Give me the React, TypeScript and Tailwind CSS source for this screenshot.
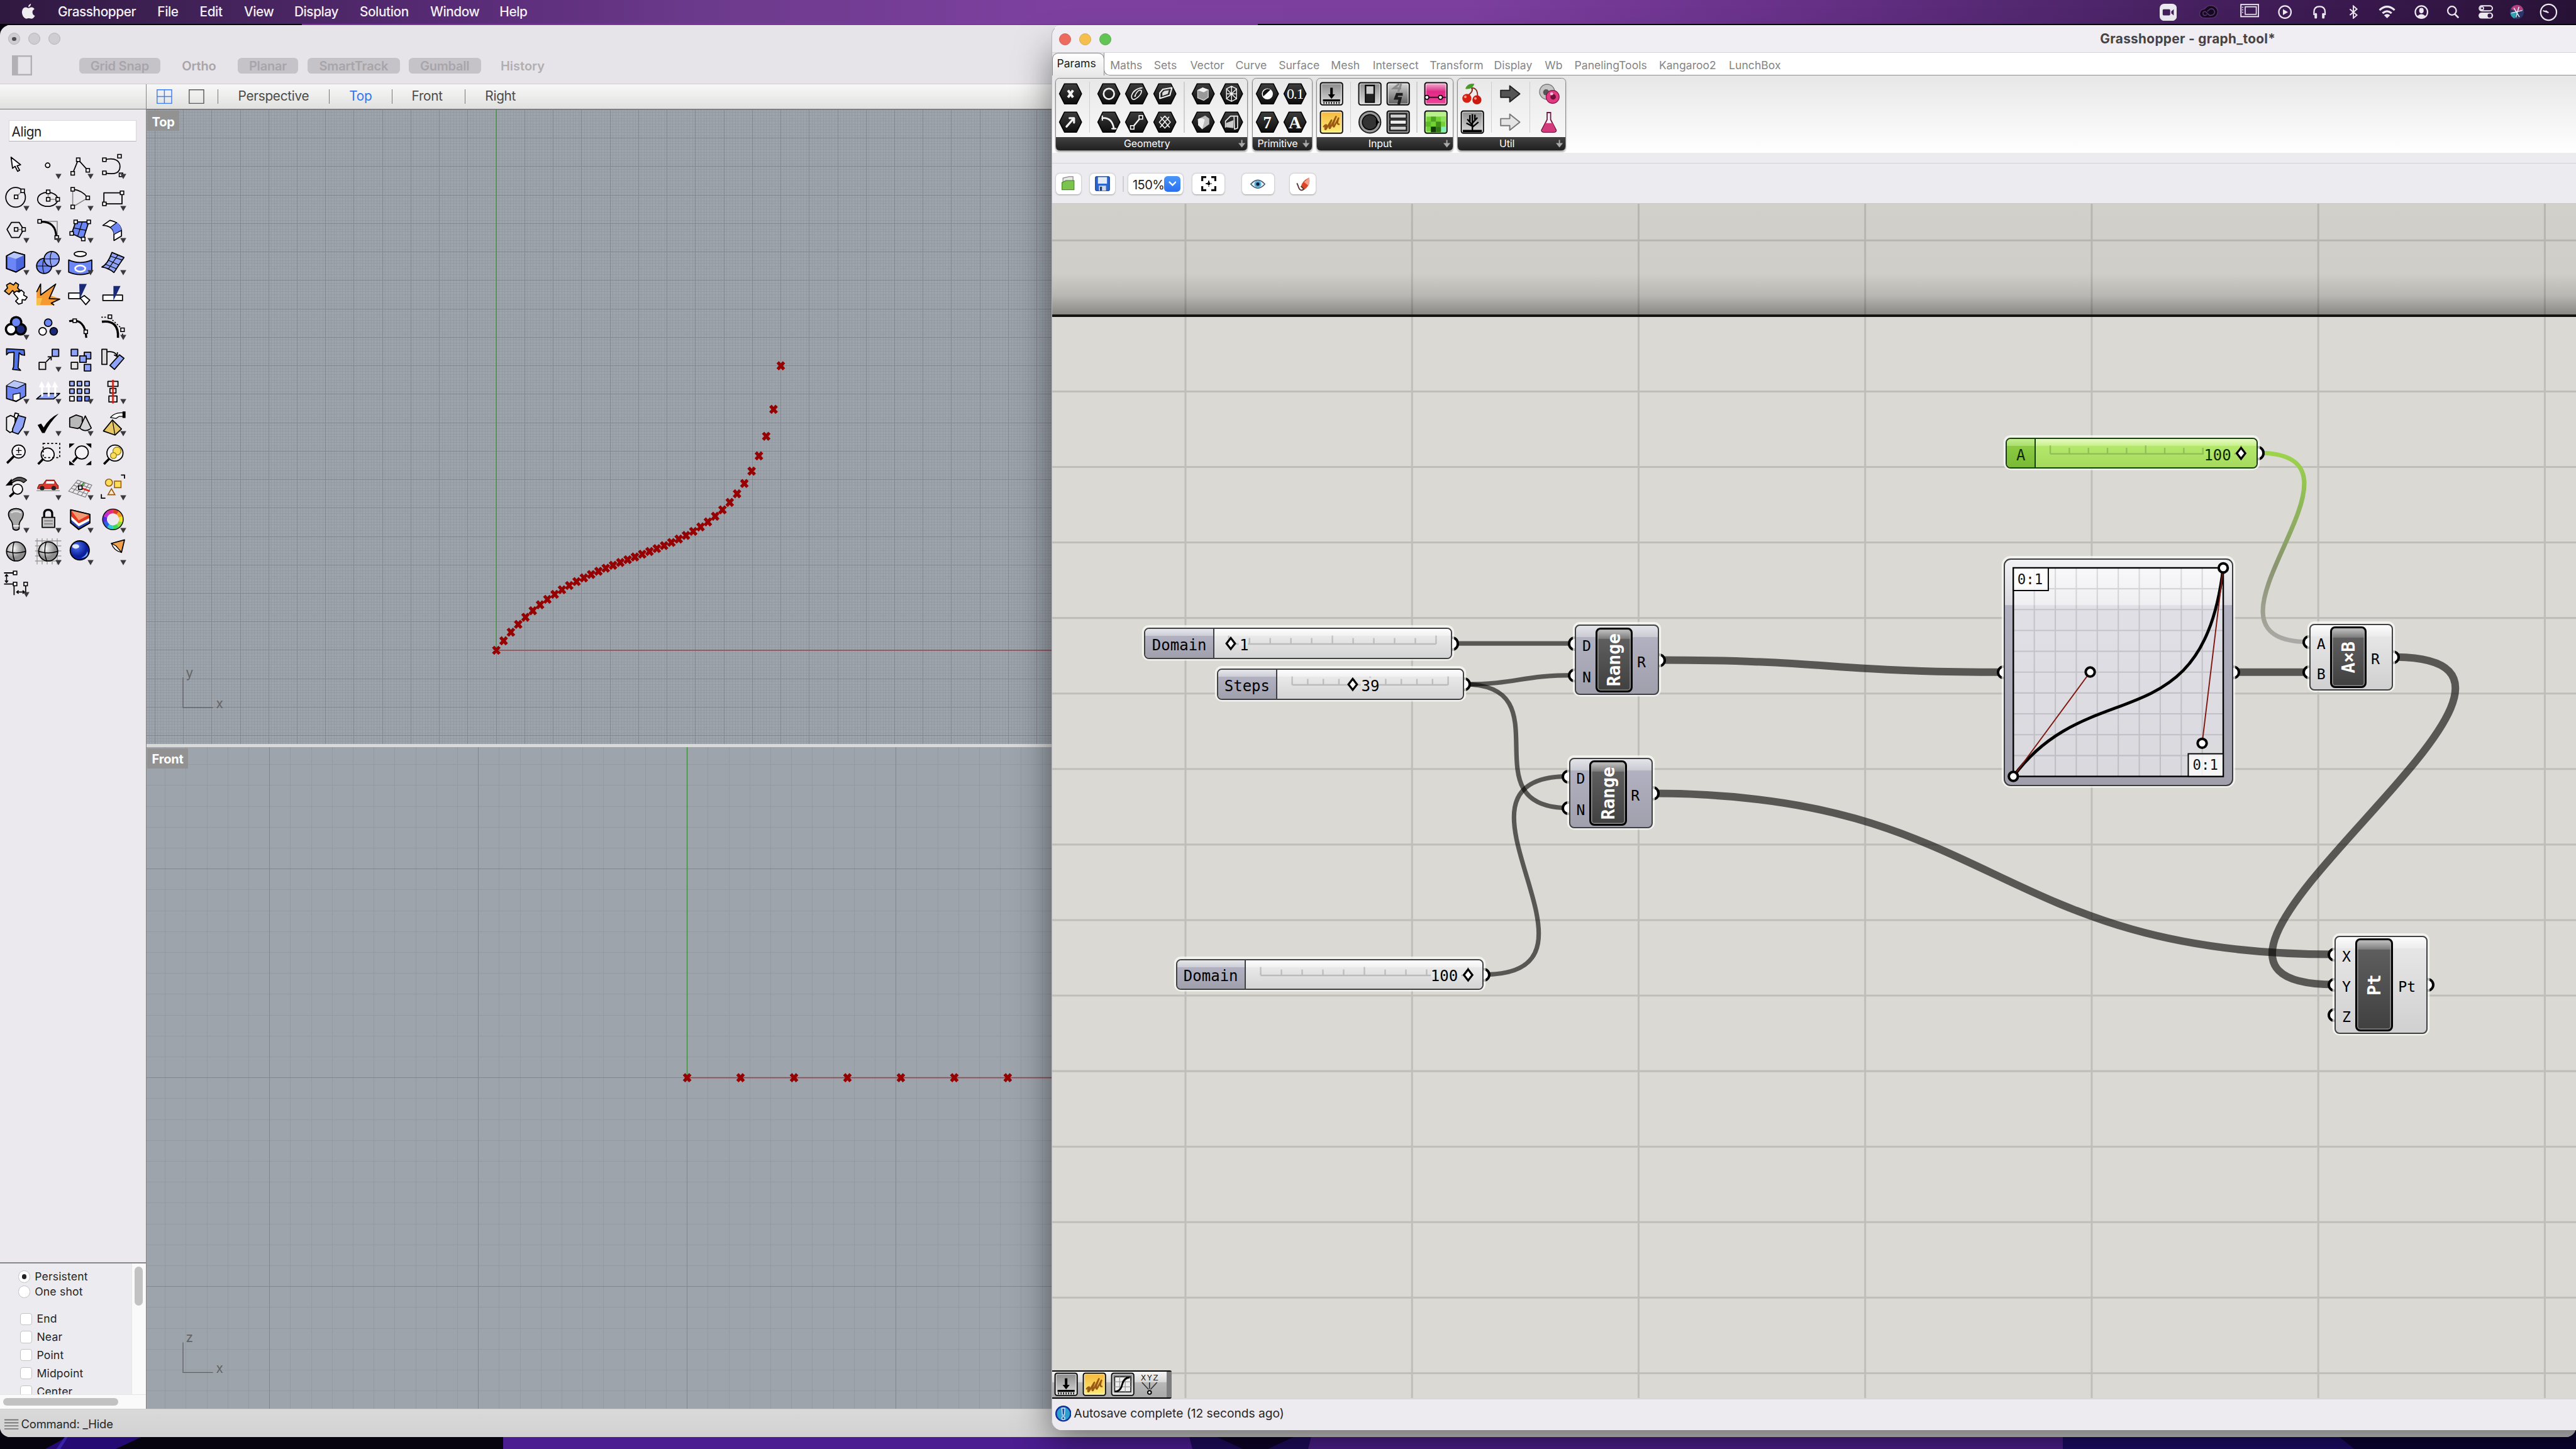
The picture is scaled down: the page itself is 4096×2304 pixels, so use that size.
import React from "react";

const BLUE = "#6c86f5";
const PALE = "#b9c6fa";
const NAVY = "#1b2a78";

/* ---------- tool palette drawings (64 x 64 cells) ---------- */

function Handle({ x, y }: { x: number; y: number }) {
  return <rect x={x - 3.5} y={y - 3.5} width={7} height={7} fill="#fff" stroke="#000" strokeWidth={2} />;
}
const H = (pts: number[][]) => pts.map(([x, y], i) => <Handle key={i} x={x} y={y} />);
const K = { fill: "none", stroke: "#000", strokeWidth: 2.2, strokeLinejoin: "round" as const };

const lens = (cx: number, cy: number, r: number, hx: number, hy: number) => (
  <>
    <path d={`M${cx - r * 0.7} ${cy + r * 0.7}L${hx} ${hy}`} stroke="#000" strokeWidth={4.5} />
    <circle cx={cx} cy={cy} r={r} fill="#f4f3f6" stroke="#000" strokeWidth={2.2} />
  </>
);

const tools: [React.ReactNode, boolean][] = [
  [<path d="M22 15L25 37L30 33L35 43L39 41L34 32L41 30Z" {...K} fill="#fff" />, false],
  [<circle cx={31} cy={31} r={4.5} {...K} fill="#fff" />, true],
  [<><path d="M17 47L28 20L47 41" {...K} />{H([[17, 47], [28, 20], [47, 41]])}</>, true],
  [<><path d="M15 20C38 14 46 24 46 33C46 45 38 51 15 46" {...K} />{H([[15, 20], [45, 13], [15, 46], [48, 50]])}</>, true],

  [<><circle cx={31} cy={31} r={19.5} {...K} /><path d="M32 30L45 18" stroke="#888" strokeWidth={2} />{H([[32, 30], [45, 18]])}</>, true],
  [<><ellipse cx={31} cy={35} rx={20} ry={14} {...K} /><path d="M32 20V35H51" stroke="#888" strokeWidth={2} fill="none" />{H([[32, 20], [32, 35], [51, 35]])}</>, true],
  [<><path d="M17 15V50L47 32" stroke="#888" strokeWidth={2} fill="none" /><path d="M17 15Q36 17 47 32" {...K} />{H([[17, 15], [17, 50], [47, 32]])}</>, true],
  [<><rect x={14} y={22} width={36} height={22} {...K} />{H([[50, 22], [15, 44]])}</>, true],

  [<><path d="M14 31L23 17H38L47 31L38 47H23Z" {...K} /><path d="M32 31H47" stroke="#888" strokeWidth={2} />{H([[32, 31], [47, 31]])}</>, true],
  [<><path d="M15 15H50V47" stroke="#888" strokeWidth={2} fill="none" /><path d="M15 16Q48 14 48 47" fill="none" stroke="#000" strokeWidth={4} />{H([[15, 15], [49, 47]])}</>, true],
  [<><path d="M23 16H49L38 50L15 39Z" {...K} fill={BLUE} /><path d="M36 16L27 44M19 28L44 33" stroke="#000" strokeWidth={1.5} />{H([[23, 16], [49, 16], [15, 39], [38, 50]])}</>, true],
  [<><path d="M12 23L26 13Q46 17 49 33V44L34 53V38Q31 24 12 23Z" {...K} fill="#fff" /><path d="M27 27L40 17Q48 24 49 33L34 41Q34 32 27 27Z" fill={BLUE} /><path d="M27 27L40 17M34 41L49 33" stroke="#000" strokeWidth={1.5} /></>, true],

  [<><path d="M13 20L28 12L49 18V42L32 52L13 45Z" {...K} fill={BLUE} /><path d="M13 20L28 12L49 18L32 26Z" fill={PALE} /><path d="M32 26V52L49 42V18Z" fill="#4a66dd" /><path d="M13 20L28 12L49 18V42L32 52L13 45Z" {...K} /></>, true],
  [<><circle cx={24} cy={40} r={15} {...K} fill={BLUE} /><path d="M24 25Q18 40 24 55M9 40H39" {...K} strokeWidth={1.3} /><circle cx={39} cy={26} r={15} {...K} fill="#8fa3f8" /><path d="M39 11Q33 26 39 41M24 26H54" {...K} strokeWidth={1.3} /></>, true],
  [<><ellipse cx={32} cy={16} rx={12} ry={5} {...K} fill="#fff" /><path d="M9 28Q32 38 55 28V52Q32 62 9 52Z" {...K} fill={BLUE} /><ellipse cx={32} cy={45} rx={10} ry={6} fill="none" stroke="#fff" strokeWidth={3.5} /></>, true],
  [<><path d="M10 42Q22 36 30 13L54 23Q46 34 34 53Q24 44 10 42Z" {...K} fill="#8fa3f8" /><path d="M22 28L44 38M42 18Q34 30 22 47M26 20L50 28M16 36L40 46" stroke="#000" strokeWidth={1.4} fill="none" /></>, true],

  [<><path d="M9 26L15 20L13 14L20 10L27 14L31 9L37 13L35 20L39 24L30 30L25 25L18 33Z" {...K} fill="#f2a43a" /><path d="M27 30L33 26L38 28L42 24L48 29L47 34L54 38L50 44L44 43L44 50L37 52L31 46L36 41Z" {...K} fill="#fff" /></>, false],
  [<><path d="M9 54V30L16 12V34L47 12L37 35L55 41L41 48L44 54Z" fill="#f59a32" /><path d="M9 40L20 40L16 54H9Z" fill="#f8c04a" /><path d="M9 28L17 12V34L47 12L34 41L55 42L38 50L44 54" {...K} /></>, false],
  [<><rect x={9} y={30} width={23} height={11} {...K} fill="#fff" /><path d="M32 40L40 35L51 44L43 53Z" {...K} fill="#fff" /><path d="M30 12H45L31 42Z" fill={NAVY} /></>, false],
  [<><rect x={12} y={34} width={39} height={11} {...K} fill="#fff" /><path d="M33 16H47L33 45Z" fill={NAVY} /></>, false],

  [<><g stroke="#000" strokeWidth={7}><circle cx={32} cy={23} r={9} /><circle cx={22} cy={37} r={9} /><circle cx={41} cy={37} r={9} /></g><circle cx={22} cy={37} r={8} fill="#fff" /><circle cx={41} cy={37} r={8} fill={NAVY} /><circle cx={32} cy={23} r={8} fill={BLUE} /></>, true],
  [<><circle cx={32} cy={24} r={7.5} {...K} fill={BLUE} /><circle cx={21} cy={41} r={7.5} {...K} fill="#fff" /><circle cx={43} cy={41} r={7.5} {...K} fill={NAVY} /></>, false],
  [<><path d="M10 21Q42 14 44 54" fill="none" stroke="#000" strokeWidth={4} />{H([[21, 20], [43, 42]])}</>, false],
  [<><path d="M10 22Q44 18 42 54" fill="none" stroke="#000" strokeWidth={4.5} /><path d="M9 13H25L51 37V54" fill="none" stroke="#000" strokeWidth={2} strokeDasharray="3 3" />{H([[26, 12], [51, 38]])}</>, true],

  [<><path d="M13 12L48 14L49 25L43 24L38 20L36 50L41 55L25 53L27 48L28 19L17 20L13 24Z" {...K} fill="#4f74ee" /></>, false],
  [<><rect x={14} y={39} width={13} height={14} {...K} fill="#e5e5e5" /><rect x={40} y={13} width={13} height={14} {...K} fill="#8fa3f8" /><path d="M28 38L37 29M31 28H38V35" {...K} /></>, true],
  [<><rect x={14} y={13} width={13} height={13} {...K} fill="#8fa3f8" /><rect x={14} y={39} width={13} height={13} {...K} fill="#e5e5e5" /><rect x={40} y={19} width={13} height={13} {...K} fill="#8fa3f8" /><rect x={31} y={26} width={13} height={13} {...K} fill="#8fa3f8" /><rect x={40} y={43} width={13} height={13} {...K} fill="#8fa3f8" /></>, false],
  [<><rect x={10} y={13} width={10} height={30} {...K} fill="#ddd" /><path d="M26 45L45 24L54 31L35 53Z" {...K} fill="#8fa3f8" /><path d="M21 18Q36 16 40 26M34 24L40 27L41 19" {...K} /></>, false],

  [<><path d="M13 22L28 12L51 18V42L32 53L13 47Z" {...K} fill={BLUE} /><path d="M13 22L28 12L51 18L34 27Z" fill={PALE} /><path d="M26 39L40 36V48L32 52L26 50Z" {...K} strokeWidth={1.6} fill="#fff" /><path d="M13 22L34 27L51 18" {...K} strokeWidth={1.5} /></>, true],
  [<><path d="M9 48L22 37H55L43 48Z" {...K} fill="#8fa3f8" /><path d="M19 43V24H15L19 15L24 24H21V43M32 43V24H28L32 15L37 24H34V43M45 43V24H41L45 15L50 24H47V43" fill="#fff" stroke="#fff" strokeWidth={2} /></>, true],
  [<>{[0, 1, 2].map((r) => [0, 1, 2].map((c) => <rect key={`${r}${c}`} x={11 + c * 15} y={13 + r * 15} width={9} height={9} {...K} fill={r === 2 && c === 0 ? "#fff" : r === 2 ? BLUE : "#9fb0f9"} />))}</>, true],
  [<><rect x={22} y={13} width={20} height={10} {...K} fill="#eee" /><rect x={26} y={27} width={12} height={9} {...K} fill="#eee" /><rect x={24} y={42} width={16} height={12} {...K} fill="#eee" /><rect x={30} y={10} width={4} height={47} fill="#c8231c" opacity={0.85} /></>, true],

  [<><path d="M13 21L21 17L30 21V46L20 51L13 46Z" {...K} fill="#eee" /><path d="M30 12L37 14L34 24L28 20Z" {...K} fill="#fff" /><path d="M25 44L36 17L51 21L46 40L36 54L25 50Z" {...K} fill="#8fa3f8" /></>, true],
  [<path d="M11 36L18 33L23 41Q34 22 53 13Q34 32 25 52H20Z" fill="#000" />, true],
  [<><path d="M11 22L24 16L36 20V38L27 43L11 40Z" {...K} fill="#b9b9b9" /><path d="M42 18L54 42Q42 52 31 42Z" {...K} fill="#d5d5d5" /></>, true],
  [<><path d="M13 48L31 26L49 44L36 56Z" {...K} fill="#e8c765" /><path d="M31 26L36 56" stroke="#000" strokeWidth={1.5} /><path d="M27 21Q36 10 53 12V19H44L38 23Z" {...K} strokeWidth={1.6} fill="#fff" /><rect x={51} y={9} width={6} height={13} fill="#000" /></>, true],

  [<>{lens(37, 25, 13, 14, 48)}<path d="M32 23H43M37 17V28M32 31H43" stroke="#000" strokeWidth={1.8} /></>, false],
  [<>{lens(31, 31, 13, 12, 50)}<rect x={22} y={9} width={33} height={28} fill="none" stroke="#000" strokeWidth={2.2} strokeDasharray="4 4" /></>, false],
  [<>{lens(35, 27, 13, 17, 46)}<path d="M10 9H21L10 18ZM54 9H43L54 18ZM10 52H21L10 43ZM54 52H43L54 43Z" fill="#000" /></>, false],
  [<>{lens(36, 28, 16, 14, 50)}<circle cx={40} cy={24} r={8} fill="#fae05a" stroke="#9b7a12" strokeWidth={1.6} /><circle cx={33} cy={33} r={6} fill="#fae05a" stroke="#9b7a12" strokeWidth={1.6} /></>, false],

  [<>{lens(35, 36, 10, 19, 51)}<path d="M11 29L23 15L25 28Z" fill="#000" /><path d="M22 20Q38 6 53 18L47 23Q36 14 24 24Z" {...K} strokeWidth={1.6} fill="#555" /></>, true],
  [<><path d="M11 33L14 27L22 26L28 18H44L49 26L52 29V35H11Z" fill="#e03a30" stroke="#7a1510" strokeWidth={1.4} /><path d="M29 20H44V25H27Z" fill="#fff" /><circle cx={20} cy={34} r={4.5} fill="#222" /><circle cx={43} cy={34} r={4.5} fill="#222" /><path d="M9 39H55" stroke="#999" strokeWidth={2} /></>, true],
  [<><path d="M9 40L27 18L55 28L42 52ZM14 34L46 46M19 28L49 40M23 23L52 34M17 42L34 21M26 46L42 24M34 49L49 26" fill="none" stroke="#777" strokeWidth={1.4} /><path d="M32 33L40 22" stroke="#3a9a2c" strokeWidth={3} /><path d="M32 33L51 40" stroke="#d32018" strokeWidth={3} />{H([[32, 33]])}</>, true],
  [<><circle cx={24} cy={23} r={7} fill="#fae05a" stroke="#9b5a12" strokeWidth={2} /><rect x={35} y={20} width={13} height={13} fill="#fae05a" stroke="#9b5a12" strokeWidth={2} /><path d="M29 35L36 47H22Z" fill="#f6ead0" stroke="#9b5a12" strokeWidth={2} /><path d="M48 8H55V15M9 46V54H17" fill="none" stroke="#000" strokeWidth={2.2} /></>, true],

  [<><path d="M25 43Q25 37 20 31Q13 18 22 12Q32 7 42 12Q50 18 43 31Q38 37 38 43V50Q32 55 26 50Z" {...K} fill="#a8a8a8" /><path d="M22 18Q32 12 42 18" stroke="#ddd" strokeWidth={3} fill="none" /><path d="M26 44H38" stroke="#eee" strokeWidth={3} /></>, true],
  [<><path d="M24 28V20Q24 12 32 12Q40 12 40 20V28" fill="none" stroke="#000" strokeWidth={4} /><rect x={20} y={27} width={25} height={20} {...K} fill="#c2c2c2" /><path d="M24 34H41M24 40H41" stroke="#777" strokeWidth={2} /></>, true],
  [<><path d="M13 12L51 21V38L29 51L13 38Z" {...K} fill="#2b49b8" /><path d="M13 12L51 21V33L29 45L13 31Z" fill="#fff" /><path d="M13 12L51 21V28L29 39L13 24Z" fill="#e4391f" /><path d="M13 12L51 21L29 33Z" fill="#f29a74" /><path d="M13 12L51 21V38L29 51L13 38Z" {...K} /></>, true],
  [<><circle cx={32} cy={31} r={16} fill="none" stroke="#eee" strokeWidth={9} />{["#e33b2a", "#f39a22", "#f1e52b", "#8fdc3a", "#3bd65a", "#2fc5d6", "#2a5fe6", "#5a2be0", "#c32bd6", "#e22b86"].map((c, i) => { const a = (i * 36 - 90) * Math.PI / 180, b = ((i + 1) * 36 - 89) * Math.PI / 180; return <path key={c} d={`M${32 + 16 * Math.cos(a)} ${31 + 16 * Math.sin(a)}A16 16 0 0 1 ${32 + 16 * Math.cos(b)} ${31 + 16 * Math.sin(b)}`} fill="none" stroke={c} strokeWidth={8} />; })}<circle cx={32} cy={31} r={20.5} fill="none" stroke="#000" strokeWidth={1.8} /></>, true],

  [<><circle cx={32} cy={31} r={19} {...K} fill="url(#ballGray)" /><path d="M28 12Q22 31 29 50M13 31Q32 37 51 31" {...K} strokeWidth={1.8} /></>, false],
  [<><path d="M6 10H58M6 20H58M6 30H58M6 40H58M6 50H58M10 5V57M20 5V57M30 5V57M40 5V57M50 5V57" stroke="#999" strokeWidth={1.6} /><circle cx={32} cy={31} r={19} {...K} fill="url(#ballGray)" /><path d="M28 12Q22 31 29 50M13 31Q32 37 51 31" {...K} strokeWidth={1.8} /></>, true],
  [<><circle cx={31} cy={29} r={19} {...K} fill="url(#ballBlue)" /><ellipse cx={23} cy={21} rx={7} ry={4.5} fill="#dfe6ff" /><path d="M34 44Q44 40 46 31Q50 42 34 44Z" fill="#7db4ff" /></>, true],
  [<><path d="M29 15L55 8L49 33Z" {...K} fill="#f3a04c" /><path d="M29 15Q34 30 49 33L38 20Z" {...K} strokeWidth={1.6} fill="#fff" /></>, true],

  [<><path d="M8 10H30M8 32H28M28 32V54M51 32V50" {...K} /><path d="M13 15V27M10 17L13 13L16 17M10 25L13 29L16 25M34 48H48M37 45L33 48L37 51M45 45L49 48L45 51" {...K} strokeWidth={2} />{H([[30, 10], [30, 32], [51, 32]])}</>, true],
];

/* ---------- viewports ---------- */

function gridPath(w: number, h: number, ox: number, oy: number, step: number, pick: (i: number) => boolean) {
  let d = "";
  for (let i = Math.ceil(-ox / step); ox + i * step < w; i++) if (pick(i)) d += `M${(ox + i * step).toFixed(2)} 0V${h}`;
  for (let i = Math.ceil(-oy / step); oy + i * step < h; i++) if (pick(i)) d += `M0 ${(oy + i * step).toFixed(2)}H${w}`;
  return d;
}

function mapper(x: number) {
  const bx = (t: number) => 3 * (1 - t) * (1 - t) * t * 0.366 + 3 * (1 - t) * t * t * 0.9 + t * t * t;
  const by = (t: number) => 3 * (1 - t) * (1 - t) * t * 0.5 + 3 * (1 - t) * t * t * 0.159 + t * t * t;
  let lo = 0, hi = 1;
  for (let i = 0; i < 40; i++) { const m = (lo + hi) / 2; if (bx(m) < x) lo = m; else hi = m; }
  return by((lo + hi) / 2);
}

const cross = (x: number, y: number) => `M${x - 6.2} ${y - 7}L${x + 6.2} ${y + 7}M${x + 6.2} ${y - 7}L${x - 6.2} ${y + 7}`;

function Viewport({ label, w, h, ox, oy, step, points, up }: { label: string; w: number; h: number; ox: number; oy: number; step: number; points: number[][]; up: string }) {
  const gy = h - 72;
  return (
    <div className="relative overflow-hidden bg-[#9da4ac]" style={{ height: h }}>
      <svg className="absolute inset-0" width={w} height={h} viewBox={`0 0 ${w} ${h}`}>
        <g shapeRendering="crispEdges" fill="none" strokeWidth={1.25}>
          <path d={gridPath(w, h, ox, oy, step, (i) => i % 10 !== 0)} stroke="#939aa2" />
          <path d={gridPath(w, h, ox, oy, step, (i) => i % 10 === 0)} stroke="#83868f" />
        </g>
        <path d={`M${ox} 0V${oy}`} stroke="#479447" strokeWidth={2} />
        <path d={`M${ox} ${oy}H${w}`} stroke="#96474f" strokeWidth={2} />
        <path d={points.map(([x, y]) => cross(x, y)).join("")} stroke="#960000" strokeWidth={6.4} fill="none" />
        <path d={`M72.5 ${gy - 60}V${gy}H132`} stroke="#5f6063" strokeWidth={1.6} fill="none" />
        <g fontFamily="Inter, sans-serif" fontSize={26} fill="#646464">
          <text x={78} y={gy - 60}>{up}</text>
          <text x={138} y={gy + 1}>x</text>
        </g>
      </svg>
      <div className="absolute left-0.5 top-0.5 flex h-10 items-center bg-[#929292] px-[9px] pt-1 text-[25px] font-bold tracking-[-0.01em] text-white">{label}</div>
    </div>
  );
}

/* ---------- ribbon drawings (48 x 48) ---------- */

function Hex({ children }: { children: React.ReactNode }) {
  return (
    <svg width={48} height={48} viewBox="0 0 48 48">
      <path d="M2 24L12 4H36L46 24L36 44H12Z" fill="url(#hexFill)" stroke="#000" strokeWidth={2} strokeLinejoin="round" />
      {children}
    </svg>
  );
}
function Tile({ fill = "url(#tileGray)", children }: { fill?: string; children: React.ReactNode }) {
  return (
    <svg width={48} height={48} viewBox="0 0 48 48">
      <rect x={2} y={2} width={44} height={44} rx={4} fill={fill} stroke="#111" strokeWidth={2.5} />
      <rect x={4.3} y={4.3} width={39.4} height={39.4} rx={2} fill="none" stroke="#fff" strokeOpacity={0.6} strokeWidth={1.6} />
      {children}
    </svg>
  );
}
const W = { fill: "none", stroke: "#f2f2f2", strokeWidth: 2.6, strokeLinejoin: "round" as const, strokeLinecap: "round" as const };
const SliderGlyph = () => (
  <Tile><path d="M24 12V26" stroke="#000" strokeWidth={5} /><path d="M17 25H31L24 34Z" /><path d="M7 37H41" stroke="#000" strokeWidth={4} /><path d="M9 40V44M14 40V44M19 40V44M24 40V44M29 40V44M34 40V44M39 40V44" stroke="#000" strokeWidth={1.8} /></Tile>
);
const ScribbleGlyph = () => (
  <Tile fill="url(#tileGold)"><path d="M8 34Q12 28 14 30Q9 40 13 38L24 20Q17 38 21 36L33 13Q24 34 29 33L38 16Q33 30 40 28" fill="none" stroke="#9a5a14" strokeWidth={3.2} strokeLinejoin="round" /></Tile>
);
const arrowPath = "M4 17H22V8L42 24L22 40V31H4Z";

const geometry = [
  [
    [<Hex><path d="M19 17L29 31M29 17L19 31" {...W} strokeWidth={5} strokeLinecap="butt" /></Hex>, <Hex><path d="M16 33L30 17M22 16H31V25" {...W} strokeWidth={4} /></Hex>],
  ],
  [
    [<Hex><circle cx={24} cy={24} r={10.5} {...W} strokeWidth={3.4} /></Hex>, <Hex><path d="M11 16Q30 14 34 37" {...W} strokeWidth={3.4} /><path d="M11 12V20M30 37H38" {...W} /></Hex>],
    [<Hex><path d="M35 12Q18 14 14 28Q14 38 22 34Q34 26 34 18Q30 14 24 22Q18 32 22 28" {...W} strokeWidth={2} /></Hex>, <Hex><path d="M17 33L32 15" {...W} strokeWidth={3} /><rect x={12} y={31} width={7} height={7} fill="#111" stroke="#fff" strokeWidth={2} /><rect x={29} y={11} width={7} height={7} fill="#111" stroke="#fff" strokeWidth={2} /></Hex>],
    [<Hex><path d="M14 22L20 15L38 12L34 27L14 33Z" {...W} /><path d="M19 22L23 18L32 17L30 24L19 28Z" fill="#ddd" /></Hex>, <Hex><path d="M24 12L35 24L24 36L13 24ZM16 14L33 34M32 14L15 34" {...W} strokeWidth={2} /></Hex>],
  ],
  [
    [<Hex><path d="M13 17L23 12L34 16V31L25 37L13 32Z" fill="#999" stroke="#ddd" strokeWidth={1.5} /><path d="M13 17L25 21L34 16L23 12Z" fill="#f2f2f2" /></Hex>, <Hex><path d="M13 18L28 11L36 17V28L22 38L14 30Z" fill="#bbb" /><path d="M14 18Q20 14 27 19L22 38L14 30Z" fill="#eee" /></Hex>],
    [<Hex><path d="M14 14L24 9L34 14V34L24 39L14 34ZM14 24H34M24 9V39M14 14L34 34M34 14L14 34" {...W} strokeWidth={1.8} /></Hex>, <Hex><path d="M12 34V22L22 12H36V36L30 38L29 14" {...W} strokeWidth={2} /><path d="M13 26L28 20V36L13 34Z" fill="#ccc" /></Hex>],
  ],
];
const primitive = [
  [
    [<Hex><circle cx={24} cy={24} r={11} fill="#fff" /><path d="M30 16A10 10 0 0 0 16 29Z" fill="#111" /></Hex>, <Hex><text x={24} y={36} textAnchor="middle" fontFamily="Liberation Serif, serif" fontWeight={700} fontSize={33} fill="#fff">7</text></Hex>],
    [<Hex><text x={24} y={34} textAnchor="middle" fontFamily="Liberation Serif, serif" fontSize={30} letterSpacing={-1.5} fill="#fff">0.1</text></Hex>, <Hex><text x={24} y={36} textAnchor="middle" fontFamily="Liberation Serif, serif" fontWeight={700} fontSize={35} fill="#fff">A</text></Hex>],
  ],
];
const input = [
  [[<SliderGlyph />, <ScribbleGlyph />]],
  [
    [<Tile><rect x={15} y={7} width={18} height={34} fill="#222" stroke="#000" strokeWidth={2} /><rect x={17} y={9} width={14} height={15} fill="#ccc" /></Tile>, <svg width={48} height={48} viewBox="0 0 48 48"><circle cx={24} cy={24} r={21.5} fill="#9b9b9b" stroke="#222" strokeWidth={2.5} /><circle cx={24} cy={24} r={15} fill="#333" stroke="#000" strokeWidth={2} /><path d="M36 18L43 24L36 30Z" fill="#000" /></svg>],
    [<Tile fill="url(#tileDark)"><path d="M26 4L15 13H30M30 4L24 20" fill="none" stroke="#8a8a8a" strokeWidth={4} /><path d="M33 25H22L19 33H28L25 45" fill="none" stroke="#1c1c1c" strokeWidth={5.5} /></Tile>, <Tile fill="#4a4a4a"><rect x={8} y={8} width={32} height={8} fill="#ccc" stroke="#000" strokeWidth={1.5} /><rect x={8} y={20} width={32} height={8} fill="#eee" stroke="#000" strokeWidth={1.5} /><rect x={8} y={32} width={32} height={8} fill="#ccc" stroke="#000" strokeWidth={1.5} /></Tile>],
  ],
  [[<Tile fill="url(#tilePink)"><path d="M4 31H44" stroke="#4a0a2c" strokeWidth={2.4} /><circle cx={6} cy={31} r={4} fill="#fff" stroke="#000" strokeWidth={2} /><circle cx={33} cy={31} r={4} fill="#fff" stroke="#000" strokeWidth={2} /></Tile>, <Tile fill="#74d135"><rect x={4} y={4} width={40} height={9} fill="#b9f08c" /><rect x={14} y={13} width={10} height={10} fill="#4da31f" /><rect x={4} y={23} width={10} height={10} fill="#5dbb2a" /><rect x={14} y={33} width={10} height={11} fill="#123c07" /><rect x={24} y={23} width={10} height={10} fill="#3f8f1a" /><rect x={34} y={13} width={10} height={10} fill="#8fe05a" /><rect x={34} y={33} width={10} height={11} fill="#84f0b8" /><rect x={24} y={33} width={10} height={11} fill="#2f7a12" /></Tile>]],
];
const util = [
  [[
    <svg width={48} height={48} viewBox="0 0 48 48"><path d="M22 12Q36 12 34 32M22 12Q28 18 14 28" fill="none" stroke="#8a2a1a" strokeWidth={2.4} /><path d="M10 14Q14 2 28 4Q24 16 10 14Z" fill="#4a9a2a" /><circle cx={13} cy={33} r={9} fill="#d81f14" /><circle cx={33} cy={36} r={9} fill="#c81a10" /><circle cx={10} cy={30} r={2.5} fill="#ff9c90" /><circle cx={30} cy={33} r={2.5} fill="#ff9c90" /></svg>,
    <Tile><path d="M24 43V24M24 30L14 18M24 26L34 15M24 34L36 24M24 32L12 26M19 23V10M29 20V9M24 24V8" stroke="#000" strokeWidth={3} /><path d="M5 42H43" stroke="#000" strokeWidth={5} /></Tile>,
  ]],
  [[
    <svg width={48} height={48} viewBox="0 0 48 48"><path d={arrowPath} fill="#555" stroke="#222" strokeWidth={2.4} strokeLinejoin="round" /></svg>,
    <svg width={48} height={48} viewBox="0 0 48 48"><path d={arrowPath} fill="#e4e4e4" stroke="#777" strokeWidth={2.4} strokeLinejoin="round" /></svg>,
  ]],
  [[
    <svg width={48} height={48} viewBox="0 0 48 48"><circle cx={20} cy={20} r={15} fill="#c4c4c4" stroke="#777" strokeWidth={1.6} /><circle cx={18} cy={21} r={6} fill="#555" /><circle cx={31} cy={30} r={13} fill="#e03a80" stroke="#8d1548" strokeWidth={1.6} /><circle cx={32} cy={30} r={5.5} fill="#6e0f38" /><circle cx={29} cy={24} r={3} fill="#ffc0dc" /></svg>,
    <svg width={48} height={48} viewBox="0 0 48 48"><path d="M20 5H27V19L38 40Q38 44 33 44H14Q9 44 9 40L20 19Z" fill="#f6f1f4" stroke="#7a1040" strokeWidth={2.2} /><path d="M17 26H31L37 40Q36 43 33 43H14Q11 43 10 40Z" fill="#d33a7c" /></svg>,
  ]],
];

function RibbonGroup({ label, blocks }: { label: string; blocks: React.ReactNode[][][] }) {
  return (
    <div className="flex h-[145px] flex-col overflow-hidden rounded-lg border-2 border-[#8b8b8b] bg-gradient-to-b from-[#e8e8e8] to-[#fbfbfb] shadow-[0_2px_3px_rgba(0,0,0,.3)]">
      <div className="flex flex-1 px-[5px] pt-1.5">
        {blocks.map((cols, b) => (
          <div key={b} className="flex">
            {b > 0 && <div className="flex w-7 justify-center pb-2"><div className="w-0.5 bg-[#cfcfcf]" /></div>}
            <div className="flex gap-2">
              {cols.map((col, c) => <div key={c} className="flex flex-col gap-2">{col.map((ic, i) => <div key={i} className="size-12">{ic}</div>)}</div>)}
            </div>
          </div>
        ))}
      </div>
      <div className="flex h-[27px] items-center bg-gradient-to-b from-[#424242] to-[#202020] pr-1 text-white">
        <span className="flex-1 text-center text-[20px] leading-none tracking-[-0.01em]">{label}</span>
        <svg width={14} height={18} viewBox="0 0 14 18"><path d="M7 2V10" stroke="#aaa" strokeWidth={2.5} /><path d="M0 8H14L7 17Z" fill="#aaa" /></svg>
      </div>
    </div>
  );
}

/* ---------- node canvas ---------- */

const CX = 2091;
const CY = 406;
const at = (x: number, y: number, w: number, h: number) => ({ left: x - CX, top: y - CY, width: w, height: h });

function Grip({ x, y }: { x: number; y: number }) {
  return <div className="absolute size-7 rounded-full border-[6px] border-black bg-white" style={{ left: x - 14 - CX, top: y - 14 - CY }} />;
}

function Slider({ x, y, w, h, label, labelW, t0, t1, knob, value, side, green, gripY }: { x: number; y: number; w: number; h: number; label: string; labelW: number; t0: number; t1: number; knob: number; value: string; side: "l" | "r"; green?: boolean; gripY: number }) {
  const ticks = Array.from({ length: 11 }, (_, i) => t0 + ((t1 - t0) * i) / 10 - x - 3);
  const base = gripY - y - 1.5;
  return (
    <>
      <Grip x={x + w} y={gripY} />
      <div
        className={"absolute flex overflow-hidden rounded-[10px] border-[3px] font-['DejaVu_Sans_Mono',monospace] text-[30px] leading-none shadow-[0_-1px_0_4px_rgba(250,250,248,.75)] " + (green ? "border-[#163f0c] text-[#0c2a05]" : "border-[#3f4041] text-black")}
        style={at(x, y, w, h)}
      >
        <div
          className={"flex shrink-0 items-center justify-center border-r-[3px] pt-2 " + (green ? "border-[#163f0c] bg-[linear-gradient(180deg,#c4ec92_0%,#a9df6a_24%,#8ccb43_25%,#79b934_100%)]" : "border-[#3f4041] bg-[linear-gradient(180deg,#e6e6ec_0%,#cdcdd6_24%,#b2b1c1_25%,#a09fac_100%)]")}
          style={{ width: labelW - 2 }}
        >
          {label}
        </div>
        <div className={"flex-1 " + (green ? "bg-[linear-gradient(180deg,#e6fac6_0%,#c7f187_24%,#b3e86b_25%,#a6da5e_100%)]" : "bg-[linear-gradient(180deg,#fdfdfd_0%,#f1f1f1_24%,#e9e9e9_25%,#d4d4d4_100%)]")} />
        <svg className="absolute inset-0" width={w - 6} height={h - 6}>
          <g stroke="#000" strokeOpacity={0.17} strokeWidth={3} fill="none">
            <path d={`M${ticks[0]} ${base}H${ticks[10]}` + ticks.map((t, i) => `M${t} ${base}V${base - (i % 5 === 0 ? 17 : 12)}`).join("")} />
          </g>
          <rect x={side === "r" ? knob - x - 77 : knob - x + 13} y={base - 14} width={side === "r" ? 60 : value.length * 18} height={17} fill={green ? "#b1e669" : "#e7e7e7"} />
          <path d={`M${knob - x - 3} ${base - 12}l8.5 11l-8.5 11l-8.5 -11z`} fill="#fff" stroke="#000" strokeWidth={4} />
        </svg>
        <div className={"absolute flex items-center pt-2 " + (side === "r" ? "justify-end" : "justify-start")} style={{ left: side === "r" ? knob - x - 123 : knob - x + 14, width: 100, top: 0, bottom: 0 }}>
          {value}
        </div>
      </div>
    </>
  );
}

function Component({ x, y, w, h, name, core, ins, outs, gray }: { x: number; y: number; w: number; h: number; name: string; core: [number, number]; ins: [string, number][]; outs: [string, number][]; gray?: boolean }) {
  return (
    <>
      {ins.map(([, gy]) => <Grip key={gy} x={x} y={gy} />)}
      {outs.map(([, gy]) => <Grip key={gy} x={x + w} y={gy} />)}
      <div
        className={"absolute rounded-[10px] border-[3px] border-[#3f4041] font-['DejaVu_Sans_Mono',monospace] text-[29px] leading-none text-black shadow-[0_-1px_0_4px_rgba(250,250,248,.75)] " + (gray ? "bg-[linear-gradient(180deg,#e4e4ea_0px,#cbcbd4_22px,#b2b1c1_23px,#a09fac_100%)]" : "bg-[linear-gradient(180deg,#fdfdfd_0px,#ececec_22px,#e6e6e6_23px,#d0d0d0_100%)]")}
        style={at(x, y, w, h)}
      >
        {ins.map(([t, gy]) => <div key={t} className="absolute left-0 w-[42px] text-center" style={{ top: gy - y - 13.5 }}>{t}</div>)}
        {outs.map(([t, gy]) => <div key={t} className="absolute text-center" style={{ top: gy - y - 13.5, left: core[1] - x - 3, width: t.length > 1 ? 56 : 34 }}>{t}</div>)}
        <div
          className="absolute top-[3px] bottom-[3px] flex items-center justify-center rounded-[10px] border-4 border-black bg-[linear-gradient(180deg,#c2c2c2_0px,#7d7d7d_18px,#5e5e5e_19px,#404040_100%)] shadow-[inset_0_0_0_2px_rgba(170,170,170,.7)]"
          style={{ left: core[0] - x - 3, width: core[1] - core[0] }}
        >
          <span className="-rotate-90 whitespace-nowrap pt-[3px] text-[35px] font-bold text-white">{name}</span>
        </div>
      </div>
    </>
  );
}

const wire = (x0: number, y0: number, x1: number, y1: number, d: number) => `M${x0} ${y0}C${x0 + d} ${y0} ${x1 - d} ${y1} ${x1} ${y1}`;

const range = (a: number, b: number, s: number) => Array.from({ length: Math.floor((b - a) / s) + 1 }, (_, i) => a + i * s);

function Canvas() {
  const gx = 4001.4, gy = 1129.7, gw = 417.2, gh = 414.5;
  return (
    <div className="relative flex-1 overflow-hidden bg-[#dbd9d3]">
      <div className="absolute inset-x-0 top-0 h-[222px] bg-[linear-gradient(180deg,#d2d0ca_0%,#d0cec8_62%,#b9b7b2_82%,#868581_100%)]" />
      <svg className="absolute inset-0" width={3029} height={2374} viewBox={`${CX} ${CY} 3029 2374`}>
        <defs>
          <linearGradient id="gw" x1="0" y1="901" x2="0" y2="1277" gradientUnits="userSpaceOnUse">
            <stop offset="0" stopColor="#9cd44a" /><stop offset=".25" stopColor="#8fbb57" /><stop offset=".6" stopColor="#8a9470" /><stop offset="1" stopColor="#aaa9a5" />
          </linearGradient>
        </defs>
        <path d={range(2356, 5119, 450.3).map((x) => `M${x} ${CY}V2780`).join("") + range(478.8, 2780, 150.1).filter((_, i) => i !== 1).map((y) => `M${CX} ${y}H5120`).join("")} stroke="#000" strokeOpacity={0.12} strokeWidth={3.8} />
        <path d={`M${CX} 628.5H5120`} stroke="#15150f" strokeWidth={5} />
        <g fill="none" stroke="#000" strokeOpacity={0.6} strokeWidth={9}>
          <path d={wire(2886, 1280, 3130, 1280, 100)} />
          <path d={wire(2909, 1361, 3130, 1343, 110)} />
          <path d={wire(2909, 1361, 3118, 1607, 205)} />
          <path d={wire(2949, 1938, 3118, 1544, 288)} />
          <g strokeWidth={15}>
            <path d={wire(3297, 1313, 3982, 1337, 340)} />
            <path d={wire(3285, 1578, 4640, 1898, 680)} />
            <path d={wire(4438, 1337, 4590, 1337, 60)} />
            <path d={wire(4756, 1307, 4640, 1958, 472)} />
          </g>
        </g>
        <path d={wire(4487, 901, 4590, 1277, 272)} fill="none" stroke="url(#gw)" strokeWidth={9} />
      </svg>

      <Slider x={3986.5} y={870.5} w={500.5} h={62} label="A" labelW={59} t0={4075.8} t1={4455} knob={4455} value="100" side="r" green gripY={901.5} />
      <Slider x={2274} y={1248.5} w={612} h={62.5} label="Domain" labelW={139} t0={2443} t1={2855} knob={2447} value="1" side="l" gripY={1280} />
      <Slider x={2418.6} y={1329.5} w={491} h={63} label="Steps" labelW={119} t0={2568.6} t1={2878.6} knob={2689} value="39" side="l" gripY={1361} />
      <Slider x={2337} y={1906.5} w={611.6} h={61.5} label="Domain" labelW={138} t0={2505.7} t1={2918} knob={2918} value="100" side="r" gripY={1938} />

      <Component x={3130} y={1242.4} w={167} h={140} name="Range" core={[3171.4, 3245.7]} ins={[["D", 1280], ["N", 1343]]} outs={[["R", 1313]]} gray />
      <Component x={3118} y={1507} w={167} h={140} name="Range" core={[3159.5, 3233.5]} ins={[["D", 1544.4], ["N", 1607]]} outs={[["R", 1577.7]]} gray />
      <Component x={4589.7} y={1240.7} w={166.5} h={133} name="A×B" core={[4631.6, 4704.6]} ins={[["A", 1277], ["B", 1337]]} outs={[["R", 1307]]} />
      <Component x={4640} y={1860.7} w={185} h={195.3} name="Pt" core={[4681.7, 4756.3]} ins={[["X", 1898.3], ["Y", 1958.3], ["Z", 2018.3]]} outs={[["Pt", 1958.3]]} />

      <Grip x={3982.5} y={1336.7} />
      <Grip x={4438} y={1336.7} />
      <div className="absolute rounded-[14px] border-[3px] border-[#3a3b3c] bg-[linear-gradient(180deg,#f2f2f4_0%,#d8d8de_20%,#b2b1c1_20.3%,#a09fab_100%)] shadow-[0_-1px_0_4px_rgba(250,250,248,.75)]" style={at(3982.5, 1110.8, 456, 452)} />
      <svg className="absolute inset-0" width={3029} height={2374} viewBox={`${CX} ${CY} 3029 2374`}>
        <rect x={gx} y={gy} width={gw} height={gh} fill="#fff" fillOpacity={0.6} />
        <path d={range(1, 9, 1).map((i) => `M${gx + (gw * i) / 10} ${gy}v${gh}M${gx} ${gy + (gh * i) / 10}h${gw}`).join("")} stroke="#000" strokeOpacity={0.12} strokeWidth={2.6} />
        <rect x={gx} y={gy} width={gw} height={gh} fill="none" stroke="#000" strokeWidth={3} />
        <g fill="#fff" fillOpacity={0.75} stroke="#000" strokeWidth={2.4}>
          <rect x={gx} y={gy} width={69.5} height={45} />
          <rect x={gx + gw - 69.5} y={gy + gh - 45} width={69.5} height={45} />
        </g>
        <g fontFamily="DejaVu Sans Mono, monospace" fontSize={28} fill="#111">
          <text x={4009.5} y={1162}>0:1</text>
          <text x={4358} y={1531}>0:1</text>
        </g>
        <path d="M4001.4 1544.2C4154.2 1336.7 4376.7 1478.3 4418.6 1129.7" fill="none" stroke="#000" strokeWidth={6} />
        <path d="M4001.4 1544.2L4154.2 1336.7M4418.6 1129.7L4376.7 1478.3" stroke="#7e1810" strokeWidth={2.4} />
        <g fill="#fff" stroke="#000" strokeWidth={5}>
          <circle cx={4001.4} cy={1544.2} r={9} /><circle cx={4154.2} cy={1336.7} r={9} /><circle cx={4376.7} cy={1478.3} r={9} /><circle cx={4418.6} cy={1129.7} r={9} />
        </g>
      </svg>

      <div className="absolute bottom-0 left-0 flex h-14 w-[238px] items-center gap-2 rounded-r border-y-[3px] border-r-[3px] border-black bg-[linear-gradient(180deg,#f5f5f5_0%,#d8d8d8_40%,#b8b8b8_42%,#a8a8a8_100%)] pl-1">
        <SliderGlyph />
        <ScribbleGlyph />
        <Tile><rect x={8} y={9} width={32} height={30} fill="#eee" stroke="#222" strokeWidth={2} /><path d="M18 9V39M29 9V39M8 19H40M8 29H40" stroke="#999" strokeWidth={1.5} /><path d="M9 38Q20 38 23 24Q26 11 38 10" fill="none" stroke="#000" strokeWidth={3.5} /></Tile>
        <svg width={44} height={48} viewBox="0 0 44 48"><text x={22} y={16} textAnchor="middle" fontFamily="Liberation Mono, monospace" fontSize={17} letterSpacing={2} fill="#222">XYZ</text><path d="M6 20L19 34M21 20V33M36 20L23 34" stroke="#333" strokeWidth={2} /><circle cx={21} cy={40} r={3.5} fill="#fff" stroke="#000" strokeWidth={2.4} /></svg>
        <div className="-mr-0.5 ml-auto h-full w-2.5 bg-[#7d7d7d]" />
      </div>
    </div>
  );
}

/* ---------- windows ---------- */

const ToolButton = ({ on, children }: { on?: boolean; children: React.ReactNode }) => (
  <div className={"flex h-[31px] items-center justify-center rounded-lg pt-0.5 text-[25px] font-semibold tracking-[-0.01em] text-[#a8a5aa] " + (on ? "bg-[#c6c3c8]" : "")}>{children}</div>
);

function Rhino() {
  const top: number[][] = range(0, 39, 1).map((i) => [695.2 + (565.5 * i) / 39, 1075 - 565.5 * mapper(i / 39)]);
  const front: number[][] = range(0, 7, 1).map((i) => [1074.5 + 106.2 * i, 657]);
  return (
    <div className="absolute left-0 top-[50px] flex h-[2806px] w-[5120px] flex-col overflow-hidden rounded-[20px] bg-[#e6e4e9]">
      <div className="h-[116px] border-t-2 border-[#f6f5f8]">
        <div className="flex h-[52px] items-center gap-4 pl-4">
          <div className="flex size-6 items-center justify-center rounded-full border-2 border-[#b4b2b6] bg-[#cfcdd1]"><div className="size-2 rounded-full bg-[#4d4d4f]" /></div>
          <div className="size-6 rounded-full border-2 border-[#b4b2b6] bg-[#cfcdd1]" />
          <div className="size-6 rounded-full border-2 border-[#b4b2b6] bg-[#cfcdd1]" />
        </div>
        <div className="grid grid-cols-[133px_162px_153px_121px_18px_184px_17px_144px_auto] items-center pl-6 pt-[7px]">
          <svg width={40} height={40} viewBox="0 0 40 40"><rect x={1.5} y={1.5} width={37} height={37} fill="none" stroke="#b2b0b4" strokeWidth={3} /><rect x={0} y={0} width={12} height={40} fill="#b2b0b4" /></svg>
          <ToolButton on>Grid Snap</ToolButton>
          <ToolButton>Ortho</ToolButton>
          <ToolButton on>Planar</ToolButton>
          <span />
          <ToolButton on>SmartTrack</ToolButton>
          <span />
          <ToolButton on>Gumball</ToolButton>
          <div className="flex h-[31px] items-center pl-[39px] pt-0.5 text-[25px] font-semibold tracking-[0em] text-[#b0aeb2]">History</div>
        </div>
      </div>
      <div className="flex h-[52px] border-b-2 border-t-2 border-b-[#747774] border-t-[#d0cfd0] bg-gradient-to-b from-[#f8f8f8] to-[#e0e1df]">
        <div className="w-[291px] border-r-2 border-[#858585]" />
        <div className="grid grid-cols-[64px_58px_221px_125px_145px_auto] items-center pl-5 text-[26px] leading-none tracking-[-0.015em] text-[#4b4b4b]">
          <svg width={31} height={29} viewBox="0 0 31 29"><path d="M1 1H30V28H1ZM15.5 1V28M1 14.5H30" fill="none" stroke="#3c7ff5" strokeWidth={1.8} /></svg>
          <svg width={31} height={29} viewBox="0 0 31 29"><path d="M1 1H30V28H1Z" fill="none" stroke="#5a5a5a" strokeWidth={1.8} /></svg>
          <span className="flex h-7 items-center border-l-2 border-[#777] pl-[39px]">Perspective</span>
          <span className="flex h-7 items-center border-l-2 border-[#777] pl-[39px] text-[#2f76f2]">Top</span>
          <span className="flex h-7 items-center border-l-2 border-[#777] pl-[38px]">Front</span>
          <span className="flex h-7 items-center border-l-2 border-[#777] pl-[39px]">Right</span>
        </div>
      </div>

      <div className="flex h-[2582px]">
        <div className="flex w-[291px] flex-col border-r-2 border-[#858585] bg-[#ebe9ee]">
          <div className="ml-[18px] mt-[21px] flex h-[42px] w-[253px] items-center border-2 border-b-[#b5b4b7] border-l-[#d8d7da] border-r-[#d8d7da] border-t-[#d8d7da] bg-white pl-1 pt-1.5 text-[26px] leading-none tracking-[-0.02em] text-[#222]">Align</div>
          <div className="mt-4 grid w-64 grid-cols-4">
            {tools.map(([art, menu], i) => (
              <svg key={i} width={64} height={64} viewBox="0 0 64 64">
                {art}
                {menu && <path d="M46.5 48H58.5L52.5 58.5Z" fill="#3a3a3c" />}
              </svg>
            ))}
          </div>
          <div className="mt-auto flex h-[291px] flex-col border-t-[3px] border-[#878787]">
            <div className="flex h-[260px]">
              <div className="w-[261px] overflow-hidden bg-[#ecebf0] text-[22px] leading-none tracking-[0.01em] text-[#242424]">
                <div className="mt-[11px] flex h-[30px] items-center gap-[9px] pl-9"><div className="flex size-6 items-center justify-center rounded-full border border-[#c3c2c5] bg-white"><div className="size-[9px] rounded-full bg-[#222]" /></div>Persistent</div>
                <div className="flex h-[30px] items-center gap-[9px] pl-9"><div className="size-6 rounded-full border border-[#c3c2c5] bg-white" />One shot</div>
                <div className="h-[21px]" />
                {["End", "Near", "Point", "Midpoint", "Center"].map((t) => (
                  <div key={t} className="flex h-9 items-center gap-[9px] pl-10"><div className="size-6 rounded-[5px] border border-[#c3c2c5] bg-white" />{t}</div>
                ))}
              </div>
              <div className="flex flex-1 justify-center border-l border-[#e6e6e6] bg-[#fafafa] pt-1.5"><div className="h-[78px] w-4 rounded-full bg-[#c2c2c2]" /></div>
            </div>
            <div className="flex flex-1 items-center border-t border-[#e6e6e6] bg-[#fafafa] pl-1.5"><div className="h-4 w-[229px] rounded-full bg-[#c2c2c2]" /></div>
          </div>
        </div>
        <div className="flex-1">
          <Viewport label="Top" w={1830} h={1261} ox={695.2} oy={1075} step={5.655} points={top} up="y" />
          <div className="h-1.5 bg-[#d9d9d8]" />
          <Viewport label="Front" w={1830} h={1315} ox={1074.5} oy={657} step={41.5} points={front} up="z" />
        </div>
      </div>

      <div className="flex h-14 items-center gap-[5px] border-t-2 border-[#cfcfd3] bg-gradient-to-b from-[#d9d9d9] to-[#d2d2d2] pl-[9px] pt-1 text-[23px] leading-none tracking-[-0.01em] text-[#262626]">
        <svg width={28} height={22} viewBox="0 0 28 22"><path d="M0 2H28M0 8H28M0 14H28M0 20H28" stroke="#6d6d6d" strokeWidth={2} /></svg>
        Command: _Hide
      </div>
    </div>
  );
}

const btn = "flex h-[41px] items-center justify-center rounded-lg bg-white shadow-[0_1px_3px_rgba(0,0,0,.35)]";

function Grasshopper() {
  return (
    <div className="absolute left-[2090px] top-[50px] flex h-[2792px] w-[3030px] flex-col overflow-hidden rounded-l-[20px] border-l border-t-2 border-l-[#b5b4b8] border-t-[#faf9fc] bg-[#f0eef3]">
      <div className="flex h-[54px] shrink-0 items-center gap-4 border-b-2 border-[#d5d4d7] pl-[14px]">
        <div className="size-6 rounded-full border border-[#d55b50] bg-[#ec6a5e]" />
        <div className="size-6 rounded-full border border-[#dba93f] bg-[#f5bf4f]" />
        <div className="size-6 rounded-full border border-[#54ad47] bg-[#61c454]" />
        <div className="ml-[1949px] text-[26px] font-bold leading-none tracking-[0.015em] text-[#454346]">Grasshopper - graph_tool*</div>
      </div>
      <div className="h-[198px] shrink-0 bg-gradient-to-b from-[#e6e6e6] from-20% to-white">
        <div className="flex h-[45px]">
          <div className="w-[104px] rounded-t-[12px] border-x-2 border-t-2 border-[#8f8f8f] bg-gradient-to-b from-white to-[#e9e9e9] pl-2 pt-[7px] text-[22px] leading-6 text-[#1c1c1c]">Params</div>
          <div className="-ml-0.5 grid flex-1 grid-cols-[87px_72px_90px_86px_104px_83px_113px_128px_101px_59px_168px_139px_auto] items-center rounded-bl-[12px] border-b-2 border-l-2 border-[#8f8f8f] bg-white pl-3 pt-[5px] text-[22px] leading-none text-[#858585]">
            {["Maths", "Sets", "Vector", "Curve", "Surface", "Mesh", "Intersect", "Transform", "Display", "Wb", "PanelingTools", "Kangaroo2", "LunchBox"].map((t) => <span key={t}>{t}</span>)}
          </div>
        </div>
        <div className="grid grid-cols-[383px_120px_272px_216px] gap-2 pl-1.5 pt-[5px]">
          <RibbonGroup label="Geometry" blocks={geometry} />
          <RibbonGroup label="Primitive" blocks={primitive} />
          <RibbonGroup label="Input" blocks={input} />
          <RibbonGroup label="Util" blocks={util} />
        </div>
      </div>
      <div className="h-[22px] shrink-0 border-b-2 border-[#d2d1d5] bg-[#ecebef]" />
      <div className="flex h-20 shrink-0 items-center border-b border-[#c9c8cb] bg-[#ecebef] pl-[7px] pt-0.5">
        <div className={btn + " w-[50px]"}><svg width={28} height={30} viewBox="0 0 28 30"><path d="M4 4L16 1H24V20L4 24Z" fill="#e8e8e8" stroke="#888" strokeWidth={1.5} /><path d="M2 13L10 9H26V27H2Z" fill="#7cc24e" stroke="#4a8a28" strokeWidth={1.5} /></svg></div>
        <div className={btn + " ml-[18px] w-[50px]"}><svg width={30} height={30} viewBox="0 0 30 30"><rect x={1} y={1} width={28} height={28} rx={2} fill="#2c66cf" stroke="#153c86" strokeWidth={1.5} /><rect x={6} y={2} width={18} height={13} fill="#e6ecf6" /><rect x={8} y={19} width={14} height={10} fill="#cfd8e8" /><rect x={10} y={21} width={4} height={8} fill="#153c86" /></svg></div>
        <div className="ml-[15px] h-8 w-0.5 bg-[#d0cfd3]" />
        <div className={btn + " ml-[9px] w-[109px] justify-between pl-[7px] pr-[3px]"}>
          <span className="pt-1 text-[25px] leading-none tracking-[-0.03em] text-[#1e1e1e]">150%</span>
          <div className="flex h-8 w-8 items-center justify-center rounded-[7px] bg-gradient-to-b from-[#4a96f8] to-[#2a6ff0]"><svg width={16} height={10} viewBox="0 0 16 10"><path d="M2 2L8 8L14 2" fill="none" stroke="#fff" strokeWidth={3} strokeLinecap="round" /></svg></div>
        </div>
        <div className={btn + " ml-[19px] w-[64px]"}><svg width={30} height={30} viewBox="0 0 30 30"><path d="M2 10V2H10M20 2H28V10M28 20V28H20M10 28H2V20" fill="none" stroke="#111" strokeWidth={4} /><path d="M15 9V21M9 15H21" stroke="#111" strokeWidth={2.5} strokeDasharray="4 1.5" /><circle cx={15} cy={15} r={3} fill="#111" /></svg></div>
        <div className={btn + " ml-[34px] w-[64px]"}><svg width={30} height={22} viewBox="0 0 30 22"><path d="M1 11Q15 -5 29 11Q15 27 1 11Z" fill="#e8f3fb" stroke="#44586a" strokeWidth={2} /><circle cx={15} cy={11} r={7} fill="#5aaede" /><circle cx={15} cy={11} r={3.4} fill="#0f2233" /></svg></div>
        <div className={btn + " ml-8 w-[51px]"}><svg width={32} height={32} viewBox="0 0 32 32"><path d="M12 22Q13 10 28 3Q32 16 20 26Z" fill="#dc4426" /><path d="M18 12L28 3Q31 10 27 19Z" fill="#f0a08c" /><path d="M4 14Q6 18 8 24Q11 31 18 26L12 20" fill="none" stroke="#5c3a34" strokeWidth={2.4} /></svg></div>
      </div>
      <Canvas />
      <div className="flex h-[62px] shrink-0 items-center gap-[5px] border-t-2 border-[#d4d3d8] bg-[#edebef] pb-1 pl-1.5 text-[24px] leading-none text-[#262626]">
        <svg width={32} height={32} viewBox="0 0 32 32"><circle cx={16} cy={16} r={14.5} fill="#2f9fd0" stroke="#12309a" strokeWidth={3} /><path d="M13 5H19L18 19H14Z" fill="#1d4fae" stroke="#d8f2ff" strokeWidth={1.6} /><circle cx={16} cy={25} r={3} fill="#1d4fae" stroke="#d8f2ff" strokeWidth={1.6} /></svg>
        Autosave complete (12 seconds ago)
      </div>
    </div>
  );
}

const S = { fill: "none", stroke: "#ece9f0", strokeWidth: 2.8 };

function MenuBar() {
  return (
    <div className="flex h-12 items-center bg-[linear-gradient(90deg,#2f1840_0px,#3d2052_300px,#582b76_900px,#6c3a8c_1400px,#7d409f_2100px,#7c3f9e_2900px,#6a328b_3500px,#4c2468_4200px,#38184c_4700px,#281236_5120px)] text-[26px] leading-none tracking-[-0.02em] text-[#f3f0f6]">
      <svg className="ml-[43px] -mt-1" width={28} height={32} viewBox="0 0 28 32"><path d="M19 1Q19 6 14 8Q13 4 19 1ZM14 10Q17 8 20 8Q24 8 26 12Q22 14 22 18Q22 23 27 25Q24 31 20 31Q17 30 14 30Q11 31 9 31Q2 28 1 18Q2 8 9 8Q12 9 14 10Z" fill="#efecf2" /></svg>
      <div className="ml-11 grid grid-cols-[198px_84px_88px_100px_130px_140px_138px_60px] font-medium">
        {["Grasshopper", "File", "Edit", "View", "Display", "Solution", "Window", "Help"].map((t) => <span key={t}>{t}</span>)}
      </div>
      <div className="ml-auto grid grid-cols-[78px_82px_76px_68px_71px_61px_71px_64px_63px_62px_60px_72px] items-center">
        <svg width={34} height={34} viewBox="0 0 34 34"><rect width={34} height={34} rx={9} fill="#ece9f0" /><rect x={6} y={11} width={15} height={12} rx={2} fill="#43205c" /><path d="M23 15L28 11V23L23 19Z" fill="#43205c" /></svg>
        <svg width={40} height={30} viewBox="0 0 40 30"><path d="M13 27Q2 27 2 18Q3 10 12 9Q17 2 25 2Q38 4 38 15Q36 27 25 27Z" fill="#160a1e" stroke="#5a3674" strokeWidth={1.5} /><path d="M17 20Q12 24 9 20Q7 14 13 14L22 22Q31 22 32 15Q30 7 23 9L17 14" fill="none" stroke="#5a3674" strokeWidth={2} /></svg>
        <svg className="-mt-1" width={38} height={28} viewBox="0 0 38 28"><rect x={1.5} y={1.5} width={35} height={24} {...S} strokeWidth={2.4} /><rect x={10} y={6} width={22} height={15} {...S} strokeWidth={2} /><path d="M5 6V21" {...S} strokeWidth={2} strokeDasharray="2 3" /></svg>
        <svg width={28} height={28} viewBox="0 0 28 28"><circle cx={14} cy={14} r={12.2} {...S} /><path d="M10 8L20 14L10 20Z" fill="#ece9f0" /></svg>
        <svg width={28} height={28} viewBox="0 0 28 28"><path d="M3 20V14Q3 3 14 3Q25 3 25 14V20" {...S} /><rect x={4} y={16} width={5} height={11} rx={2} fill="#ece9f0" /><rect x={19} y={16} width={5} height={11} rx={2} fill="#ece9f0" /></svg>
        <svg width={20} height={28} viewBox="0 0 20 28"><path d="M3 8L17 20L10 26V2L17 8L3 20" {...S} strokeWidth={2.4} /></svg>
        <svg width={34} height={26} viewBox="0 0 34 26"><path d="M2 9Q17 -5 32 9" {...S} strokeWidth={4} /><path d="M8 15Q17 7 26 15" {...S} strokeWidth={4} /><path d="M11 19Q17 14 23 19L17 25Z" fill="#ece9f0" /></svg>
        <svg width={28} height={28} viewBox="0 0 28 28"><circle cx={14} cy={14} r={12.2} {...S} /><ellipse cx={14} cy={11} rx={4.5} ry={5.5} fill="#ece9f0" /><path d="M5 23Q14 13 23 23Q14 29 5 23Z" fill="#ece9f0" /></svg>
        <svg width={26} height={26} viewBox="0 0 26 26"><circle cx={11} cy={10} r={8.5} {...S} /><path d="M17 17L24 24" {...S} strokeWidth={3.4} /></svg>
        <svg width={30} height={28} viewBox="0 0 30 28"><rect x={1.5} y={1.5} width={26} height={10} rx={5} {...S} strokeWidth={2.4} /><circle cx={7} cy={6.5} r={3} {...S} strokeWidth={2} /><rect y={15} width={29} height={12} rx={6} fill="#ece9f0" /><circle cx={22} cy={21} r={4} fill="#331845" /></svg>
        <svg width={30} height={30} viewBox="0 0 30 30"><circle cx={15} cy={15} r={14} fill="#2a3768" /><path d="M15 1A14 14 0 0 1 28 11L15 15L3 9Q7 2 15 1Z" fill="#b0417e" /><path d="M2 17L15 15L10 28Q3 25 2 17Z" fill="#2fa6b4" /><path d="M4 17L26 12M9 7L20 25M19 5L13 26" stroke="#e8f4ff" strokeWidth={1.8} /></svg>
        <svg width={36} height={36} viewBox="0 0 36 36"><circle cx={18} cy={18} r={15.8} {...S} /><path d="M18 19L7 15M18 19L12 15" {...S} strokeWidth={2.4} /></svg>
      </div>
    </div>
  );
}

export default function App() {
  return (
    <div className="h-[2304px] w-[4096px] overflow-hidden">
      <div className="relative h-[2880px] w-[5120px] overflow-hidden bg-[#07030f] font-['Inter',sans-serif] [zoom:0.8]">
        <svg className="absolute size-0">
          <defs>
            <radialGradient id="ballGray" cx=".35" cy=".35"><stop offset="0" stopColor="#fff" /><stop offset="1" stopColor="#8c8c8c" /></radialGradient>
            <radialGradient id="ballBlue" cx=".35" cy=".3"><stop offset="0" stopColor="#4f74f0" /><stop offset="1" stopColor="#0c1f9c" /></radialGradient>
            <linearGradient id="hexFill" x1="0" y1="0" x2="0" y2="1"><stop offset="0" stopColor="#3c3c3c" /><stop offset="1" stopColor="#0d0d0d" /></linearGradient>
            <linearGradient id="tileGray" x1="0" y1="0" x2="0" y2="1"><stop offset="0" stopColor="#8a8a8a" /><stop offset="1" stopColor="#dcdcdc" /></linearGradient>
            <linearGradient id="tileDark" x1="0" y1="0" x2="0" y2="1"><stop offset="0" stopColor="#d8d8d8" /><stop offset="1" stopColor="#5a5a5a" /></linearGradient>
            <linearGradient id="tileGold" x1="0" y1="0" x2="0" y2="1"><stop offset="0" stopColor="#f5b73c" /><stop offset="1" stopColor="#fdee78" /></linearGradient>
            <linearGradient id="tilePink" x1="0" y1="0" x2="0" y2="1"><stop offset="0" stopColor="#f0b8d2" /><stop offset=".4" stopColor="#e02a86" /><stop offset="1" stopColor="#f0459c" /></linearGradient>
          </defs>
        </svg>
        <svg className="absolute bottom-0 left-0" width={5120} height={40} viewBox="0 0 5120 40">
          <rect width={5120} height={40} fill="#08040f" />
          <path d="M90 40L140 12H290L230 40Z" fill="#240a72" />
          <path d="M112 40L130 14H136L120 40Z" fill="#3a22a8" />
          <path d="M1000 40V0H2360L2420 40Z" fill="#4b1d90" />
          <path d="M2360 0H2620L2600 40H2370Z" fill="#1d0b5a" />
          <path d="M2410 12H2580L2520 40H2470Z" fill="#0d0326" />
          <path d="M2610 0H4100V40H2600Z" fill="#4a1d86" />
          <path d="M4100 0H4630L4680 40H4100Z" fill="#1c0b64" />
          <path d="M4630 0H5120V40H4680Z" fill="#0b0432" />
        </svg>
        <MenuBar />
        <div className="absolute left-[600px] top-12 h-0.5 w-[1900px] bg-[#7a3b9c]" />
        <Rhino />
        <div className="absolute left-[2090px] top-[80px] h-[2762px] w-[3100px] rounded-l-[20px] shadow-[0_20px_70px_rgba(0,0,0,.5)]" />
        <Grasshopper />
      </div>
    </div>
  );
}
